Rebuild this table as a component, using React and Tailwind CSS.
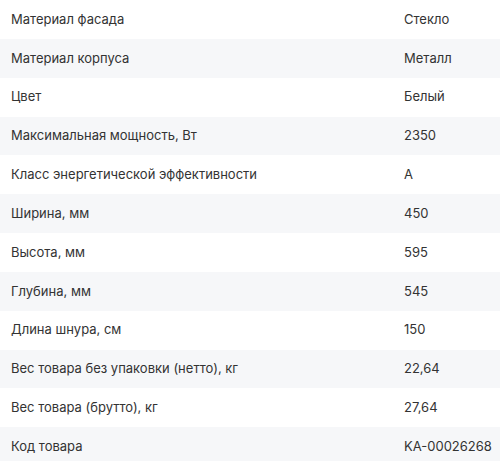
const SPECS = [
  ['Материал фасада', 'Стекло'],
  ['Материал корпуса', 'Металл'],
  ['Цвет', 'Белый'],
  ['Максимальная мощность, Вт', '2350'],
  ['Класс энергетической эффективности', 'A'],
  ['Ширина, мм', '450'],
  ['Высота, мм', '595'],
  ['Глубина, мм', '545'],
  ['Длина шнура, см', '150'],
  ['Вес товара без упаковки (нетто), кг', '22,64'],
  ['Вес товара (брутто), кг', '27,64'],
  ['Код товара', 'KA-00026268'],
];

export default function App() {
  return (
    <div className="w-[500px] bg-white font-['Inter',sans-serif] text-[13px] text-[#333]">
      {SPECS.map(([name, value], i) => (
        <div
          key={name}
          className={`flex h-[38.85px] items-center ${i % 2 ? 'bg-[#f6f7f9]' : 'bg-white'}`}
        >
          <span className="pl-[11px] flex-1">{name}</span>
          <span className="w-[96px]">{value}</span>
        </div>
      ))}
    </div>
  );
}
